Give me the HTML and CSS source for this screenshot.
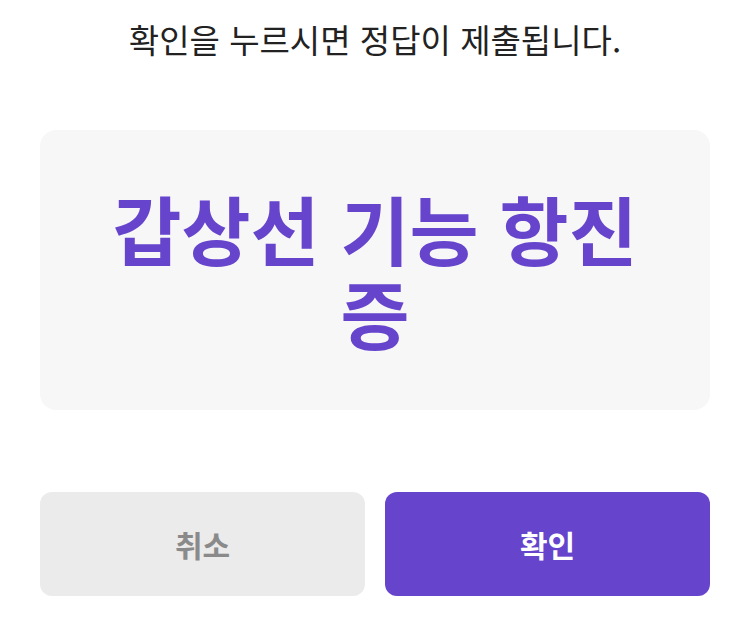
FILE: index.html
```html
<!DOCTYPE html>
<html lang="ko">
<head>
  <meta charset="UTF-8" />
  <title>정답 제출</title>
  <link rel="stylesheet" href="styles.css">
</head>
<body>
  <div class="container">
    <p class="notice">확인을 누르시면 정답이 제출됩니다.</p>

    <div class="answer-card">
      <div class="answer">갑상선 기능 항진증</div>
    </div>

    <div class="actions">
      <button class="btn btn-cancel">취소</button>
      <button class="btn btn-ok">확인</button>
    </div>
  </div>
</body>
</html>
```

FILE: styles.css
```css
body {
  font-family: "Noto Sans CJK KR", "Noto Sans", sans-serif;
  margin: 0;
  padding: 0;
  background: #ffffff;
}
.container {
  display: flex;
  flex-direction: column;
  padding: 14px 40px 0;
}
.notice {
  margin: 0;
  font-size: 33px;
  line-height: 50px;
  color: #222222;
  text-align: center;
}
.answer-card {
  margin-top: 66px;
  height: 280px;
  background-color: #f7f7f8;
  border-radius: 16px;
  display: flex;
  align-items: center;
  justify-content: center;
  padding: 0 50px;
  box-sizing: border-box;
}
.answer {
  font-size: 75px;
  font-weight: 700;
  line-height: 84px;
  color: #6644cc;
  text-align: center;
}
.actions {
  display: flex;
  gap: 20px;
  margin-top: 82px;
}
.btn {
  flex: 1;
  height: 104px;
  border: none;
  border-radius: 12px;
  font-family: inherit;
  font-size: 30px;
  font-weight: 700;
}
.btn-cancel {
  background-color: #ebebeb;
  color: #8a8a8a;
}
.btn-ok {
  background-color: #6644cc;
  color: #ffffff;
}
```
